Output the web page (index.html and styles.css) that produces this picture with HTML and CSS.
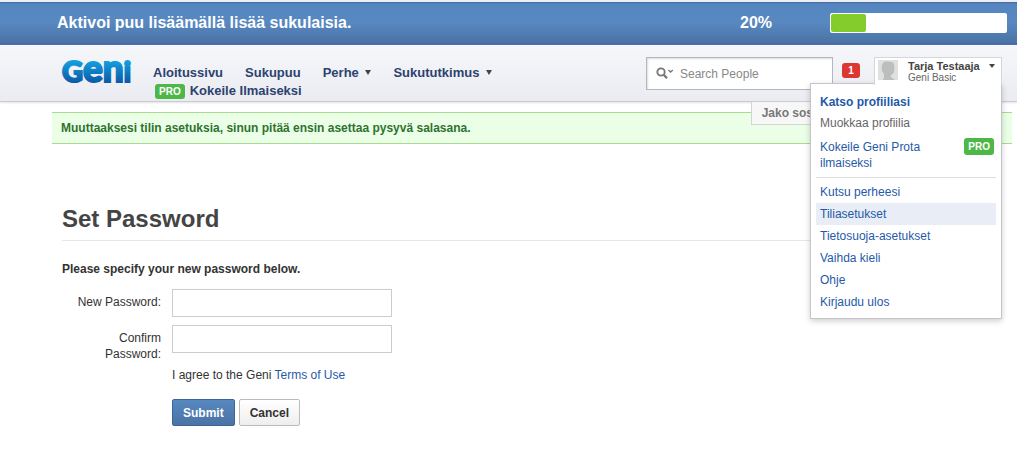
FILE: index.html
```html
<!DOCTYPE html>
<html lang="fi">
<head>
    <meta charset="UTF-8">
    <meta name="viewport" content="width=device-width, initial-scale=1.0">
    <title>Set Password - Geni</title>
    <link rel="stylesheet" href="styles.css">
</head>
<body>
    <div class="progress-banner">
        <span class="banner-text">Aktivoi puu lisäämällä lisää sukulaisia.</span>
        <span class="banner-percent">20%</span>
        <div class="progress"><div class="progress-fill" style="width: 20%"></div></div>
    </div>
    <header class="header">
        <a class="logo" href="#" aria-label="Geni">
            <svg width="80" height="52" viewBox="0 0 80 52">
                <defs>
                    <linearGradient id="logoFill" gradientUnits="userSpaceOnUse" x1="0" y1="18" x2="0" y2="40">
                        <stop offset="0" stop-color="#12a0e0"/>
                        <stop offset="1" stop-color="#0d58a6"/>
                    </linearGradient>
                </defs>
                <text class="logo-text" x="1" y="39" fill="url(#logoFill)" stroke="url(#logoFill)"><tspan font-size="29">G</tspan><tspan font-size="37">en</tspan><tspan font-size="28">i</tspan></text>
            </svg>
        </a>
        <nav class="nav">
            <a href="#">Aloitussivu</a>
            <a href="#">Sukupuu</a>
            <a href="#">Perhe <i class="caret"></i></a>
            <a href="#">Sukututkimus <i class="caret"></i></a>
            <a class="nav-pro" href="#"><span class="pro">PRO</span>Kokeile Ilmaiseksi</a>
        </nav>
        <div class="search">
            <svg width="18" height="13" viewBox="0 0 18 13" fill="none" stroke="#777">
                <circle cx="5" cy="5" r="3.7" stroke-width="1.8"/>
                <path d="M7.8 7.8 L11 11.2" stroke-width="2.4"/>
                <path d="M12.4 3 L14.6 5 L16.8 3" stroke-width="1.4"/>
            </svg>
            <input type="text" placeholder="Search People" aria-label="Search People">
        </div>
        <a class="badge" href="#">1</a>
        <div class="account">
            <button class="account-button" type="button">
                <svg width="20" height="20" viewBox="0 0 20 20">
                    <rect width="20" height="20" fill="#e0e0e0"/>
                    <path d="M5 3 C7 1 14 1 16 4 C17 7 16 9 16 12 C15 14 14 15 13 15 L13 17 L17 20 L5 20 L6 17 L6 14 C3 11 3 6 5 3 Z" fill="#bcbebe"/>
                </svg>
                <span class="account-name"><b>Tarja Testaaja</b><small>Geni Basic</small></span>
                <i class="caret"></i>
            </button>
            <div class="menu">
                <a class="menu-profile" href="#">Katso profiiliasi</a>
                <a class="menu-edit" href="#">Muokkaa profiilia</a>
                <a class="menu-try" href="#"><span>Kokeile Geni Prota ilmaiseksi</span><span class="pro">PRO</span></a>
                <hr>
                <a href="#">Kutsu perheesi</a>
                <a class="active" href="#">Tiliasetukset</a>
                <a href="#">Tietosuoja-asetukset</a>
                <a href="#">Vaihda kieli</a>
                <a href="#">Ohje</a>
                <a href="#">Kirjaudu ulos</a>
            </div>
        </div>
        <button class="share" type="button">Jako sos</button>
    </header>
    <main class="page">
        <p class="notice">Muuttaaksesi tilin asetuksia, sinun pitää ensin asettaa pysyvä salasana.</p>
        <form class="content">
            <h1>Set Password</h1>
            <p class="intro">Please specify your new password below.</p>
            <div class="field">
                <label for="newPassword">New Password:</label>
                <input type="password" id="newPassword">
            </div>
            <div class="field">
                <label for="confirmPassword">Confirm Password:</label>
                <input type="password" id="confirmPassword">
            </div>
            <p class="terms">I agree to the Geni <a href="#">Terms of Use</a></p>
            <div class="actions">
                <button class="submit" type="submit">Submit</button>
                <button class="cancel" type="button">Cancel</button>
            </div>
        </form>
    </main>
</body>
</html>
```
FILE: styles.css
```css
* {
    box-sizing: border-box;
}
body {
    margin: 0;
    font-family: "Liberation Sans", Arial, sans-serif;
    font-size: 12px;
    line-height: 16px;
    color: #333;
    background: #fff;
}
a {
    color: #1f5aa8;
    text-decoration: none;
}
button, input {
    font-family: inherit;
    font-size: 12px;
}
button {
    cursor: pointer;
}
.progress-banner {
    display: flex;
    align-items: center;
    height: 45px;
    padding: 0 10px 0 57px;
    border-top: 2px solid #eceef2;
    border-bottom: 2px solid #4568a8;
    background: linear-gradient(#44699f 0, #5586c0 2px, #5788c0 50%, #4b73a5 100%);
    color: #fff;
    font-size: 16px;
    font-weight: bold;
}
.banner-text {
    flex: 1;
}
.banner-percent {
    width: 90px;
}
.progress {
    width: 177px;
    height: 20px;
    padding: 1px;
    border-radius: 2px;
    background: #fff;
}
.progress-fill {
    height: 100%;
    border-radius: 2px;
    background: #84cc2c;
}
.header {
    position: relative;
    display: flex;
    align-items: flex-start;
    height: 57px;
    padding: 12px 15px 0 61px;
    border-bottom: 1px solid #c9cbd0;
    background: linear-gradient(#f6f7fb, #eaecf1);
    box-shadow: 0 1px 2px #e4e4e4;
}
.logo {
    width: 92px;
    margin-top: -14px;
}
.logo svg {
    display: block;
}
.logo-text {
    font-family: Lato, sans-serif;
    font-weight: 900;
    stroke-width: 2px;
}
.nav {
    flex: 1;
    display: flex;
    flex-wrap: wrap;
    column-gap: 22px;
    padding-top: 7px;
    font-size: 13px;
    font-weight: bold;
    line-height: 18px;
}
.nav a {
    color: #2d426f;
}
.nav-pro {
    padding-left: 2px;
}
.caret {
    display: inline-block;
    border: 3px solid transparent;
    border-top: 5px solid #444;
    border-bottom: 0;
}
.nav .caret {
    margin: 0 0 2px 3px;
}
.pro {
    display: inline-block;
    padding: 0 4px;
    border-radius: 3px;
    background: #4db848;
    color: #fff;
    font-size: 10px;
    font-weight: bold;
    line-height: 15px;
}
.nav-pro .pro {
    margin-right: 5px;
}
.search {
    display: flex;
    align-items: center;
    width: 187px;
    height: 33px;
    padding: 0 9px;
    border: 1px solid #b4b7bc;
    background: #fff;
    box-shadow: inset 1px 1px 2px #ddd;
}
.search input {
    flex: 1;
    min-width: 0;
    padding: 0 0 0 6px;
    border: 0;
    outline: 0;
    background: none;
}
.search input::placeholder {
    color: #888;
    opacity: 1;
}
.badge {
    width: 18px;
    margin: 6px 14px 0 9px;
    border-radius: 3px;
    background: #dc3732;
    color: #fff;
    font-size: 10px;
    font-weight: bold;
    line-height: 15px;
    text-align: center;
}
.account {
    position: relative;
    z-index: 2;
    width: 128px;
}
.account-button {
    position: relative;
    z-index: 1;
    display: flex;
    align-items: flex-start;
    width: 100%;
    height: 28px;
    padding: 2px 6px 0 3px;
    border: 1px solid #d4d6da;
    border-bottom: 0;
    background: #fff;
    text-align: left;
}
.account-name {
    flex: 1;
    padding-left: 10px;
    color: #444;
    line-height: 12px;
    white-space: nowrap;
}
.account-name b, .account-name small {
    display: block;
    font-size: 11px;
}
.account-name small {
    font-size: 10px;
    line-height: 11px;
    color: #666;
}
.account-button .caret {
    margin-top: 4px;
    border-top-width: 4px;
}
.menu {
    position: absolute;
    top: 26px;
    right: 0;
    width: 192px;
    padding: 8px 5px 5px;
    border: 1px solid #c4c6ca;
    background: #fff;
    box-shadow: 0 2px 6px rgba(0, 0, 0, 0.2);
}
.menu a {
    display: block;
    padding: 0 4px;
    line-height: 22px;
}
.menu .menu-profile {
    font-weight: bold;
    line-height: 20px;
}
.menu .menu-edit {
    color: #666;
}
.menu .menu-try {
    display: flex;
    justify-content: space-between;
    align-items: flex-start;
    gap: 30px;
    padding: 5px 2px 0 4px;
    line-height: 16px;
}
.menu-try .pro {
    margin-top: -1px;
    line-height: 17px;
}
.menu hr {
    margin: 6px 0 3px;
    border: 0;
    border-top: 1px solid #ddd;
}
.menu .active {
    background: #e9edf6;
}
.share {
    position: absolute;
    top: 57px;
    right: 193px;
    height: 23px;
    padding: 0 10px;
    border: 1px solid #d4d4d4;
    border-top: 0;
    background: #f7f7f7;
    color: #777;
    font-weight: bold;
}
.page {
    padding: 10px 5px 24px 52px;
}
.notice {
    margin: 0 0 60px;
    padding: 7px 9px;
    border: solid #a5dc8e;
    border-width: 1px 0;
    background: #ebffe6;
    color: #2f7232;
    font-weight: bold;
}
.content {
    padding: 0 10px;
}
h1 {
    margin: 0 0 20px;
    padding-bottom: 6px;
    border-bottom: 1px solid #e6e6e6;
    color: #444;
    font-size: 24px;
    line-height: 30px;
}
.intro {
    margin: 0 0 12px;
    font-weight: bold;
}
.field {
    display: flex;
    align-items: flex-start;
    gap: 11px;
    margin-bottom: 5px;
}
.field label {
    width: 99px;
    padding: 5px 0 0 10px;
    text-align: right;
}
.field input {
    width: 220px;
    height: 28px;
    margin-bottom: 3px;
    border: 1px solid #ccc;
}
.terms {
    margin: 0 0 16px 110px;
}
.actions {
    display: flex;
    gap: 4px;
    margin-left: 110px;
}
.actions button {
    height: 27px;
    padding: 0 10px;
    border: 1px solid #bbb;
    border-radius: 2px;
    background: linear-gradient(#fff, #eee);
    color: #333;
    font-weight: bold;
}
.actions .submit {
    border-color: #3b6596;
    background: linear-gradient(#5788c0, #4b73a5);
    color: #fff;
}
```
